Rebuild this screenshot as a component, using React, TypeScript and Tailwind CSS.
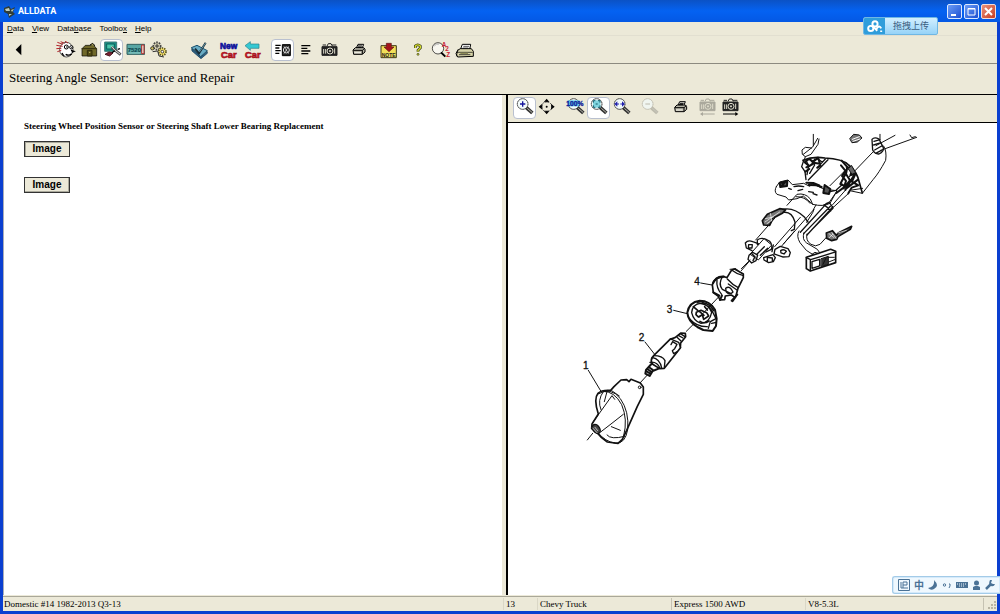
import React from "react";
import clsx from "clsx";

type ToolProps = {
  label: string;
  active?: boolean;
  disabled?: boolean;
  children: React.ReactNode;
};

function Tool({ label, active, disabled, children }: ToolProps) {
  return (
    <button
      type="button"
      aria-label={label}
      disabled={disabled}
      className={clsx(
        "h-[22px] w-[23px] shrink-0 rounded-sm border",
        active ? "border-[#b9c0cf] bg-white" : "border-transparent"
      )}
    >
      <svg viewBox="3 3 63 60" className="block h-5 w-[21px]" fill="none" stroke="#000" strokeWidth="3">
        {children}
      </svg>
    </button>
  );
}

function Group({ children }: { children: React.ReactNode }) {
  return <div className="flex">{children}</div>;
}

function PrinterIcon({ x = 0, y = 0 }: { x?: number; y?: number }) {
  return (
    <g transform={`translate(${x} ${y})`}>
      <path d="M27 29L33 16H50L45 29Z" fill="#f4f3ea" />
      <path d="M18 33L25 26H50L54 31V39L46 46H20Z" fill="#b5b3a5" />
      <path d="M19 34H46L53 28M46 34V45M33 21H45M31 25H43" />
      <path d="M22 41H42" stroke="#f4f3ea" />
    </g>
  );
}

function CameraIcon({ x = 0, y = 0, color = "#222" }: { x?: number; y?: number; color?: string }) {
  return (
    <g transform={`translate(${x} ${y})`} stroke={color}>
      <path d="M15 23H60V49H15Z" fill={color} />
      <path d="M17 18H27M45 18H58M30 21L34 14H42L46 21" />
      <path d="M20 30V44M26 30V44M53 28V44" stroke="#dedccb" />
      <circle cx="39" cy="36" r="9" fill={color} stroke="#dedccb" />
      <path d="M36 36H42M39 33V39" stroke="#dedccb" />
    </g>
  );
}

function Lens({ color = "#333", children }: { color?: string; children?: React.ReactNode }) {
  return (
    <g stroke={color}>
      <path d="M40 32L58 48" strokeWidth="11" />
      <path d="M43 34L58 47" stroke="#b9b9b0" strokeWidth="3" />
      <circle cx="29" cy="21" r="16" fill="#f3fbfb" strokeWidth="3" strokeDasharray="5 1" />
      {children}
    </g>
  );
}

function MainToolbar() {
  return (
    <div className="flex h-7 shrink-0 gap-[7px] overflow-hidden border-b border-[#8c8a80] bg-[#ece9d8] pt-[3px] pl-1">
      <Tool label="Back">
        <path d="M26 32L43 15V49Z" fill="#000" stroke="none" />
      </Tool>
      <div className="ml-[17px] flex">
        <Tool label="Technician">
          <ellipse cx="37" cy="32" rx="20" ry="22" fill="#fff" strokeWidth="2" />
          <path d="M10 10L27 16M7 19L26 22M7 29L22 28M10 38L22 34M20 8L32 13M33 7L42 12" stroke="#b3242a" />
          <circle cx="37" cy="24" r="6" fill="#fff" />
          <circle cx="52" cy="25" r="5" fill="#fff" />
          <path d="M37 24H40M52 26H55M51 34L60 37L53 40M35 46Q45 52 53 44M24 42Q27 49 31 51" strokeWidth="4" />
        </Tool>
        <Tool label="Garage">
          <path d="M15 29L25 19H50L59 29V51H15Z" fill="#6f6829" strokeWidth="2" />
          <path d="M39 18L47 13L52 18V21" fill="#a39b55" />
          <path d="M14 29H59" stroke="#302c0b" />
          <path d="M31 34H45V51H31Z" fill="#514b14" stroke="#302c0b" />
          <path d="M36 40H40" stroke="#c7bd6e" />
        </Tool>
        <Tool label="Diagnostics" active>
          <path d="M14 9H50V37H14Z" fill="#168e83" stroke="#447a78" />
          <path d="M20 15H43V30H20Z" fill="#49c5aa" stroke="#0b5e5c" />
          <path d="M15 46L27 39L39 42L29 51Z" fill="#7a2232" stroke="#4a1720" />
          <path d="M35 24L43 32L62 47" stroke="#555" strokeWidth="8" />
          <path d="M35 22L45 34L60 45" stroke="#ddd" />
          <path d="M36 41L44 35M53 31L60 29" strokeWidth="4" />
        </Tool>
        <Tool label="Codes">
          <path d="M12 16H65V46H12Z" fill="#58a6a4" stroke="#315f60" />
          <path d="M56 18H63V44H56Z" fill="#e8dcd0" stroke="#b92c2c" />
          <text x="14" y="39" fontSize="18" fontWeight="bold" fill="#063e48" stroke="none" className="font-['Liberation_Sans']">7520</text>
          <path d="M17 42H52" stroke="#aee4dc" strokeWidth="2" />
        </Tool>
        <Tool label="Parts">
          <circle cx="33" cy="21" r="11" fill="#d8d3b5" stroke="#444" strokeWidth="5" strokeDasharray="5 3" />
          <circle cx="19" cy="28" r="5" fill="#c9bc65" strokeWidth="2" />
          <circle cx="49" cy="38" r="11" fill="#f3df69" stroke="#55501e" strokeWidth="5" strokeDasharray="4 3" />
          <path d="M33 14V27M27 21H39M20 38L35 36L39 51L54 54M46 35L52 42" stroke="#333" />
          <circle cx="49" cy="38" r="4" fill="#fff" strokeWidth="2" />
        </Tool>
      </div>
      <div className="ml-[12px] flex">
        <Tool label="Check list">
          <path d="M10 26L27 19L58 35L38 53Z" fill="#69acc4" stroke="#174e6c" />
          <path d="M11 29L38 54L58 38V43L39 59L12 36Z" fill="#2d668c" stroke="#0b344e" strokeWidth="2" />
          <path d="M21 29L33 43L53 11" stroke="#172b36" strokeWidth="6" />
          <path d="M34 39L53 12" stroke="#8dc9d9" strokeWidth="2" />
        </Tool>
      </div>
      <Group>
        <Tool label="New car">
          <g strokeWidth="2" fontWeight="bold" className="font-['Liberation_Sans']">
            <text x="6" y="31" fontSize="25" fill="#10149c" stroke="#10149c">New</text>
            <text x="9" y="57" fontSize="28" fill="#cc1523" stroke="#a3101c">Car</text>
          </g>
        </Tool>
        <Tool label="Previous car">
          <path d="M12 20L28 8V15H54V28H28V34Z" fill="#35c8d2" stroke="#297e88" strokeWidth="2" />
          <text x="12" y="57" fontSize="28" fontWeight="bold" fill="#cc1523" stroke="#a3101c" strokeWidth="2" className="font-['Liberation_Sans']">Car</text>
        </Tool>
      </Group>
      <Group>
        <Tool label="Text and image" active>
          <path d="M13 19H29M13 27H25M13 35H29M13 43H25" strokeWidth="4" />
          <path d="M34 17H58V50H34Z" fill="#222" />
          <circle cx="46" cy="33" r="9" stroke="#ddd" />
          <path d="M39 22L53 44M53 22L39 44M46 31V36" stroke="#ddd" strokeWidth="2" />
        </Tool>
        <Tool label="Text only">
          <path d="M22 20H49M22 28H40M22 36H49M22 44H43" strokeWidth="4" />
        </Tool>
        <Tool label="Image only"><CameraIcon /></Tool>
      </Group>
      <Tool label="Print"><PrinterIcon /></Tool>
      <Tool label="Note">
        <path d="M12 20H58V56H12Z" fill="#f2df58" stroke="#3e3817" />
        <path d="M28 13H43V24H51L36 38L21 24H28Z" fill="#a5151b" stroke="#5c1717" strokeWidth="2" />
        <text x="14" y="53" fontSize="15" fontWeight="bold" fill="#222" stroke="none" className="font-['Liberation_Sans']">NOTE</text>
      </Tool>
      <Group>
        <Tool label="Help">
          <path d="M25 27V21Q32 14 40 21V27L33 34V38" stroke="#333811" strokeWidth="8" />
          <path d="M25 27V21Q32 14 40 21V27L33 34V38" stroke="#d5db2f" strokeWidth="4" />
          <circle cx="33" cy="46" r="3" fill="#d5db2f" stroke="#333811" strokeWidth="2" />
        </Tool>
        <Tool label="Look up">
          <ellipse cx="24" cy="28" rx="17" ry="17" fill="#f8f7ef" strokeWidth="2" />
          <path d="M33 40L46 53" strokeWidth="6" />
          <path d="M13 21Q18 13 27 15" stroke="#aaa" />
          <g fill="#c91d33" stroke="none" fontSize="19" fontWeight="bold" className="font-['Liberation_Sans']">
            <text x="35" y="23">A</text>
            <text x="46" y="37">2</text>
            <text x="49" y="53">Z</text>
          </g>
        </Tool>
        <Tool label="Fax">
          <path d="M22 32L28 16H53L50 32Z" fill="#fff" />
          <path d="M14 34L22 29H55L61 37V52L14 54L9 44Z" fill="#d6d3a8" />
          <path d="M10 40H59M18 47H52M31 22H48M29 27H46M15 31L10 52" strokeWidth="2" />
          <path d="M22 43H45" stroke="#8c8b58" strokeWidth="4" />
        </Tool>
      </Group>
    </div>
  );
}

function ImageToolbar() {
  return (
    <div className="flex h-7 shrink-0 gap-[5px] overflow-hidden border-b border-black bg-[#ece9d8] pt-[2px] pl-[5px]">
      <Group>
        <Tool label="Zoom in" active>
          <Lens><path d="M21 21H37M29 13V29" stroke="#14149c" strokeWidth="4" /></Lens>
        </Tool>
        <Tool label="Pan">
          <path d="M32 5L41 16H23ZM32 52L41 41H23ZM8 29L19 20V38ZM56 29L45 20V38Z" fill="#000" stroke="none" />
          <circle cx="32" cy="29" r="15" stroke="#333" strokeWidth="3" strokeDasharray="4 4" />
          <circle cx="32" cy="29" r="3" fill="#000" stroke="none" />
        </Tool>
      </Group>
      <Group>
        <Tool label="Actual size">
          <Lens />
          <path d="M11 10H47V28H11Z" fill="#65d0e8" stroke="none" />
          <text x="7" y="27" fontSize="20" fontWeight="bold" fill="#11229a" stroke="#11229a" strokeWidth="1" className="font-['Liberation_Sans']">100%</text>
        </Tool>
        <Tool label="Fit page" active>
          <Lens>
            <path d="M18 10H40V32H18Z" fill="#7fd4df" stroke="none" />
            <path d="M19 17V11H25M33 11H39V17M19 25V31H25M33 31H39V25M26 21H32" stroke="#155b6a" />
          </Lens>
        </Tool>
        <Tool label="Fit width">
          <Lens>
            <path d="M13 21L22 13V29ZM45 21L36 13V29Z" fill="#2323ad" stroke="none" />
            <path d="M20 21H27M31 21H38" stroke="#2323ad" />
          </Lens>
        </Tool>
      </Group>
      <Tool label="Zoom out" disabled>
        <g opacity=".7"><Lens color="#aaa89c"><path d="M22 21H36" /></Lens></g>
      </Tool>
      <Tool label="Print image"><PrinterIcon x={8} y={-2} /></Tool>
      <Group>
        <Tool label="Previous image" disabled>
          <CameraIcon x={3} y={-8} color="#aaa89c" />
          <path d="M62 51H22" stroke="#aaa89c" />
          <path d="M18 51L27 45V57Z" fill="#aaa89c" stroke="none" />
        </Tool>
        <Tool label="Next image">
          <CameraIcon x={3} y={-8} />
          <path d="M18 51H58" />
          <path d="M64 51L55 45V57Z" fill="#000" stroke="none" />
        </Tool>
      </Group>
    </div>
  );
}

function SteeringDiagram() {
  return (
    <svg
      viewBox="580 130 340 320"
      className="mt-[7px] ml-[72px] h-[320px] w-[340px] shrink-0"
      role="img"
      aria-label="Steering column exploded view"
      fill="none"
      stroke="#111"
      strokeLinejoin="round"
      strokeLinecap="round"
    >
      {/* column assembly */}
      <g transform="translate(730 125) scale(.3333)" strokeWidth="3">
        <path d="M250 28V62M263 40L248 66L220 88M267 42L264 58L243 88L226 95L217 88L216 75L226 67L245 69M226 95L221 110" />
        <path d="M360 40L371 28L388 30L396 39L382 51L367 53Z" fill="#777" />
        <path d="M367 43L388 35M369 49L390 42" stroke="#fff" />
        <path d="M438 62L495 31M452 76L560 37M540 30L545 38L556 35" />
        <path d="M426 43Q433 35 447 42L460 68Q462 80 447 87Q435 88 428 75ZM432 49L450 44M431 60L453 53M434 75L455 63M437 85L454 76" strokeWidth="4" />
        <path d="M450 28V43M461 63Q471 78 467 106Q446 145 430 163L397 205L364 198M428 82L355 158M366 195L398 190" />
        <path d="M219 106Q248 93 285 99Q337 101 356 120Q375 136 384 158L397 204" strokeWidth="5" />
        <path d="M221 107L215 125L225 140L228 164M228 107L236 122L231 149M239 102L254 120L239 145M259 98L277 112M294 104L235 165M286 102L262 128" strokeWidth="4" />
        <path d="M224 112L237 102L250 110L264 98L270 116L251 113L238 124ZM229 127L247 118L255 103M226 140L238 132M262 128L272 122" strokeWidth="6" />
        <path d="M335 107L352 126L348 147L360 166L341 190L348 168L336 153L346 137L333 121M350 126L368 132L361 151L377 145L366 170L385 181L365 188L355 205M346 148L331 177L346 184L319 204M372 151L346 195M384 164L349 190" strokeWidth="6" />
        <path d="M342 140L300 182M365 122L377 143L366 148L355 132Z" fill="#666" />
        <path d="M139 185L149 171L174 165L187 179L221 175L239 184L249 176L274 189L292 194L321 197L300 235Q279 246 248 238L220 213L201 221L176 225L168 216L141 208Q131 199 139 185Z" fill="#fff" />
        <path d="M149 174L172 168L171 183L151 186ZM155 183L167 169M229 173L250 174L268 181M284 180L301 192L297 207L280 204ZM236 180L260 181L275 186" fill="#555" strokeWidth="6" />
        <path d="M192 185Q205 181 221 185M236 200L250 202M249 206L261 210M204 197L218 193M176 190L184 193M300 200L318 196L338 178" strokeWidth="4" />
        <path d="M171 241L201 208Q226 203 241 222L248 238M198 215Q225 214 240 235M320 200L299 230L282 240M346 196L308 239M356 205L308 249" />
        <path d="M97 287L112 268L149 251L167 254L157 265L129 280L119 301L101 300Z" fill="#777" strokeWidth="5" />
        <path d="M105 291L149 261M106 281L130 276M111 296L126 285M121 265L126 290" stroke="#fff" strokeWidth="2" />
        <path d="M158 253Q192 246 224 277L234 291M162 262Q186 260 195 291L193 313L184 317" strokeWidth="4" />
        <path d="M77 345L134 280M134 365L211 277M148 371L252 253L248 263L230 292M161 356L193 319M250 254L258 240" />
        <path d="M211 322L290 235M221 326L301 244M231 330L309 245M240 320L309 250M282 240L298 233L307 245L302 258L293 248Z" strokeWidth="4" />
        <path d="M82 345Q97 334 119 349Q129 360 124 373L108 381L104 365L82 358Z" fill="#fff" strokeWidth="4" />
        <path d="M61 387L102 341L125 360L86 404Z" fill="#fff" />
        <path d="M46 354Q54 344 68 350L85 356M46 354L49 369L66 377M56 359L67 359L66 369L55 369Z" strokeWidth="4" />
        <path d="M57 391L68 382L83 390L78 407L65 414L54 403ZM67 388L75 395L69 407M79 389L103 365M91 391L113 370" strokeWidth="4" />
        <path d="M135 373L151 364L174 371L181 383L177 395L158 396L132 387ZM152 377Q161 371 169 379L162 387L153 384Z" fill="#fff" strokeWidth="4" />
        <path d="M101 398L129 389L136 398L130 410L116 413L102 405ZM112 397L127 399L127 410M112 397V409M130 360L126 380" strokeWidth="4" />
        <path d="M207 318Q198 333 210 353L229 376L249 389M222 323Q215 344 230 354L262 373L271 386M231 327Q226 347 243 358Q257 367 270 358L291 335" strokeWidth="3" />
        <path d="M289 324L307 317L319 331L326 323L365 304L361 313L324 335L320 343L305 347L290 340Z" fill="#777" strokeWidth="5" />
        <path d="M297 326L311 337M306 323L318 340M324 324L349 316M298 338L308 328" stroke="#fff" strokeWidth="2" />
        <path d="M229 397L302 373L317 379V413L241 438L229 431Z" fill="#fff" strokeWidth="5" />
        <path d="M229 398L242 404L317 381M241 404V437M246 410L269 403V423L246 430Z" strokeWidth="4" />
        <path d="M274 401L295 394V418L274 424Z" fill="#333" />
        <path d="M279 418L288 399M295 397H313M296 411L314 404M246 388L255 382L266 386" />
        <path d="M0 433L18 431L34 448M34 437L57 410" />
      </g>
      {/* exploded parts */}
      <g transform="translate(570 260) scale(.3333)" strokeWidth="4">
        <path d="M514 26L540 0M426 132L471 84M349 214L397 166M210 369L233 344M75 506L94 482M52 540L68 520" strokeWidth="3" />
        <path d="M485 30L494 27L520 42V53L504 85L497 111L488 124L495 112L484 105L466 108L464 119L450 120L445 109L430 98L427 74Q435 48 460 49L471 53Z" fill="#fff" strokeWidth="5" />
        <path d="M441 59Q438 84 455 103M457 51Q444 72 457 88L483 101M472 57Q488 75 505 83M475 72L501 90M486 31Q501 43 518 46M467 85Q480 75 489 96Q479 107 469 96Z" />
        <path d="M485 122L502 104M430 97L448 107M450 120L456 107M429 70Q437 50 462 50" strokeWidth="6" />
        <path d="M352 158Q357 126 389 122Q420 122 435 149L440 176L438 198L428 213L400 210L382 201Q354 184 352 158Z" fill="#fff" strokeWidth="6" />
        <path d="M365 158Q367 133 390 130Q416 133 425 157Q419 188 393 190Q371 184 365 158ZM382 128Q409 129 423 148M359 177Q381 201 412 200M425 150L438 176L421 185L415 205M425 190L439 187" />
        <path d="M379 157L393 151L410 158L416 168L401 178L397 164L385 171L378 164ZM389 155L402 166M390 184Q403 193 417 183M397 128Q420 131 431 152M370 140L383 151M404 140L412 150" strokeWidth="5" />
        <path d="M426 132L388 172" strokeWidth="3" />
        <path d="M333 219L346 220L347 230L332 249L331 264L283 325L269 326L247 312Q239 301 251 287L300 238L315 233Z" fill="#fff" strokeWidth="5" />
        <path d="M331 221L344 229M325 226L339 234M321 232L333 243M251 287Q278 287 285 302L283 323M246 292Q271 297 275 324M240 307Q262 304 270 325M301 237L326 247L332 263M303 254L308 245L321 253L314 266L307 272L311 281L322 275" />
        <path d="M247 309L228 330L226 341L239 348L248 333L266 326M236 321L249 330M232 327L245 336M228 333L241 341" strokeWidth="6" />
        <path d="M84 400Q95 389 122 391L132 380L153 360L170 359L177 365L183 358L211 369L220 381V403L202 439L170 511L157 538L144 550L112 546Q93 534 82 519L65 506L66 492L85 462Q70 417 84 400Z" fill="#fff" strokeWidth="5" />
        <path d="M84 402Q123 379 151 416Q178 454 173 509Q166 551 137 550Q105 545 84 518M99 394Q133 393 155 434Q174 478 161 528M125 392L148 408M100 395Q81 421 93 449M112 391L103 425M68 488L126 407L134 418M92 516Q126 490 160 463M111 525Q122 540 164 529M124 500L151 511" strokeWidth="3" />
        <ellipse cx="79" cy="507" rx="10" ry="15" transform="rotate(-35 79 507)" fill="#444" />
        <path d="M75 502L83 512M68 504L81 518" stroke="#fff" strokeWidth="2" />
        <circle cx="209" cy="382" r="4" strokeWidth="3" />
        <path d="M55 331L93 394M225 246L254 283M311 151L352 161M392 69L426 75" strokeWidth="3" />
        <g fill="#111" stroke="#111" strokeWidth="1" fontSize="30" className="font-['Liberation_Sans']">
          <text x="39" y="327">1</text>
          <text x="206" y="242">2</text>
          <text x="290" y="159">3</text>
          <text x="373" y="76">4</text>
        </g>
      </g>
    </svg>
  );
}

function TitleBar() {
  return (
    <header className="flex h-[22px] shrink-0 items-center justify-between bg-linear-to-b from-[#0b52c5] via-[#0462f2] to-[#0458e4] px-1">
      <div className="flex items-center gap-[2px] pt-[2px]">
        <svg viewBox="0 0 12 12" className="h-3 w-3">
          <path d="M0 2L5 0L7 3L11 1L9 6L11 8L5 12L4 8L0 6Z" fill="#303d38" />
          <path d="M1 3L5 2L6 5L2 5M7 4L10 3L8 6M5 8H8L5 10Z" fill="#c0cebf" />
        </svg>
        <h1 className="font-['Roboto',sans-serif] text-[9px] font-bold text-white">ALLDATA</h1>
      </div>
      <div className="flex gap-[2px]">
        <button type="button" aria-label="Minimize" className="h-[15px] w-[15px] rounded-[2px] border border-[#dce9ff] bg-linear-to-br from-[#6b9bf5] to-[#1e4ed2]">
          <svg viewBox="0 0 13 13" className="block"><path d="M3 9H8V11H3Z" fill="#fff" /></svg>
        </button>
        <button type="button" aria-label="Maximize" className="h-[15px] w-[15px] rounded-[2px] border border-[#dce9ff] bg-linear-to-br from-[#6b9bf5] to-[#1e4ed2]">
          <svg viewBox="0 0 13 13" className="block"><path d="M3 3.5H10V10H3ZM3 4H10" fill="none" stroke="#fff" /></svg>
        </button>
        <button type="button" aria-label="Close" className="h-[15px] w-[15px] rounded-[2px] border border-[#f3dcd8] bg-linear-to-br from-[#e9907a] to-[#c63a1c]">
          <svg viewBox="0 0 13 13" className="block"><path d="M3 3L10 10M10 3L3 10" stroke="#fff" strokeWidth="2" /></svg>
        </button>
      </div>
    </header>
  );
}

function MenuBar() {
  return (
    <nav className="flex h-[14px] shrink-0 items-center gap-2 border-b border-[#e2dfd0] bg-[#ece9d8] pl-1 font-['Liberation_Sans',sans-serif] text-[8px] leading-3 text-black">
      <button type="button"><u>D</u>ata</button>
      <button type="button"><u>V</u>iew</button>
      <button type="button">Data<u>b</u>ase</button>
      <button type="button">Toolbo<u>x</u></button>
      <button type="button"><u>H</u>elp</button>
    </nav>
  );
}

function ImageButton({ pressed }: { pressed?: boolean }) {
  return (
    <button
      type="button"
      className={clsx(
        "block h-4 w-[46px] border border-[#333] bg-[#ece9d8] font-['Liberation_Sans',sans-serif] text-[10px] leading-[14px] font-bold text-black",
        pressed ? "shadow-[inset_1px_1px_0_#aaa99c]" : "shadow-[inset_-1px_-1px_0_#aaa99c]"
      )}
    >
      Image
    </button>
  );
}

function StatusBar() {
  return (
    <footer className="grid h-[15px] shrink-0 grid-cols-[500fr_34fr_134fr_134fr_178fr_14fr] items-center border-t border-[#aaa899] bg-[#ece9d8] font-['Liberation_Serif',serif] text-[9px] leading-3 whitespace-nowrap text-black">
      <span className="pl-px">Domestic #14 1982-2013 Q3-13</span>
      <span className="border-l border-[#dad7c6] pl-[2px]">13</span>
      <span className="border-l border-[#dad7c6] pl-[2px]">Chevy Truck</span>
      <span className="border-l border-[#c5c2b2] pl-[2px]">Express 1500 AWD</span>
      <span className="border-l border-[#dad7c6] pl-[2px]">V8-5.3L</span>
      <span className="flex h-3 items-end justify-end border-l border-[#c5c2b2]">
        <svg viewBox="0 0 9 9" className="h-[9px] w-[9px]">
          <path d="M6 0h2v2h-2zM3 3h2v2h-2zM6 3h2v2h-2zM0 6h2v2h-2zM3 6h2v2h-2zM6 6h2v2h-2z" fill="#b8b4a2" />
        </svg>
      </span>
    </footer>
  );
}

function UploadBadge() {
  return (
    <button
      type="button"
      className="absolute top-[17px] right-[62px] flex h-[18px] w-[75px] overflow-hidden rounded-[2px] border border-[#6fb7e4] bg-linear-to-b from-[#d2efff] to-[#96d3f8] font-['Noto_Sans_CJK_SC',sans-serif] text-[9px] leading-4 text-[#3b5e80]"
    >
      <span className="flex h-4 w-[21px] items-center justify-center bg-[#2f9ddb]">
        <svg viewBox="0 0 48 40" className="h-[13px] w-4" fill="none" stroke="#fff" strokeWidth="6">
          <circle cx="11" cy="26" r="8" />
          <circle cx="24" cy="12" r="8" />
          <path d="M17 19L31 33M28 28Q37 13 43 26M43 32V37" />
        </svg>
      </span>
      <span className="flex-1 text-center">拖拽上传</span>
    </button>
  );
}

function InputMethodBar() {
  return (
    <div className="absolute right-0 bottom-5 flex h-[18px] w-[108px] items-center gap-[4px] rounded-l-[3px] border border-r-0 border-[#a3cbe8] bg-[#eff8fe] pl-[5px] text-[#4a7296] shadow-[inset_0_0_0_1px_#d5eafa]">
      <svg viewBox="0 0 12 12" className="h-3 w-3" fill="none" stroke="currentColor">
        <path d="M.5.5H11.5V11.5H.5ZM5 9V3H9V6H5M3 3V9H10" />
      </svg>
      <span className="font-['Noto_Sans_CJK_SC',sans-serif] text-[10px] leading-3 font-bold">中</span>
      <svg viewBox="0 0 10 10" className="h-[10px] w-[10px]"><path d="M6 0Q12 6 6 9Q3 11 0 8Q7 7 6 0Z" fill="currentColor" /></svg>
      <svg viewBox="0 0 10 10" className="h-[10px] w-[10px]" fill="none" stroke="currentColor"><circle cx="2.5" cy="5" r="1.2" /><path d="M7 4H8V6L7 8" /></svg>
      <svg viewBox="0 0 12 8" className="h-2 w-3"><path d="M0 1H12V7H0Z" fill="currentColor" /><path d="M1 3H11M3 5H9" stroke="#eff8fe" strokeDasharray="1 1" /></svg>
      <svg viewBox="0 0 9 11" className="h-[11px] w-[9px]"><circle cx="4.5" cy="3" r="2.5" fill="currentColor" /><path d="M1 10V7L3 6H6L8 7V10Z" fill="currentColor" /></svg>
      <svg viewBox="0 0 10 10" className="h-[10px] w-[10px]"><path d="M1 9L6 4" stroke="currentColor" strokeWidth="2.5" /><path d="M5 0Q3 4 6 6Q9 7 10 4L8 4L6 3L7 0Z" fill="currentColor" /></svg>
    </div>
  );
}

export default function App() {
  return (
    <div className="relative flex h-screen flex-col overflow-hidden bg-[#0a3fd0] px-[3px] pb-[3px]">
      <div className="-mx-[3px]">
        <TitleBar />
      </div>
      <MenuBar />
      <MainToolbar />
      <div className="h-[31px] shrink-0 border-b border-black bg-[#ece9d8] pl-[6px] font-['Liberation_Serif',serif] text-[13px] leading-7 whitespace-pre text-black">
        Steering Angle Sensor:{"  "}Service and Repair
      </div>
      <main className="grid min-h-0 flex-1 grid-cols-[499fr_4px_491fr] bg-[#ece9d8] pb-px">
        <section className="border-l border-[#a9adb8] bg-white pt-6 pl-5">
          <h2 className="mb-[8px] font-['Liberation_Serif',serif] text-[9px] leading-[14px] font-bold text-black">
            Steering Wheel Position Sensor or Steering Shaft Lower Bearing Replacement
          </h2>
          <div className="flex flex-col gap-5">
            <ImageButton pressed />
            <ImageButton />
          </div>
        </section>
        <div />
        <section className="flex flex-col overflow-hidden border-l-2 border-black bg-white">
          <ImageToolbar />
          <SteeringDiagram />
        </section>
      </main>
      <StatusBar />
      <UploadBadge />
      <InputMethodBar />
    </div>
  );
}
